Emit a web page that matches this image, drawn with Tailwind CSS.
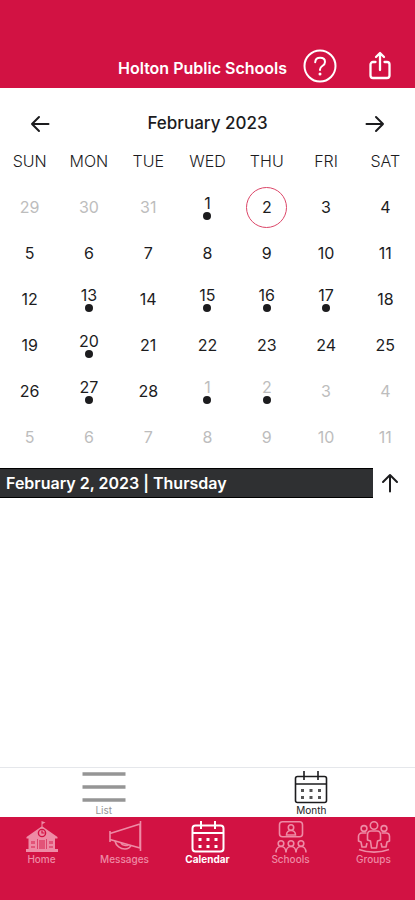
<!DOCTYPE html>
<html lang="en">

<head>
  <meta charset="UTF-8" />
  <meta name="viewport" content="width=device-width, initial-scale=1.0" />
  <title>Holton Public Schools</title>
  <script src="https://cdn.jsdelivr.net/npm/@tailwindcss/browser@4"></script>
</head>

<body class="min-h-screen flex flex-col bg-white text-[#1c1c1e] font-['Inter',sans-serif]">
  <!-- Header -->
  <header class="h-[88px] pr-6 pb-1 flex items-end justify-end bg-[#d21243] text-white">
    <h1 class="h-9 mr-4 pt-1 flex items-center text-base font-semibold">Holton Public Schools</h1>
    <button aria-label="Help" class="mr-8 h-9">
      <svg class="w-[34px] h-[34px]" viewBox="0 0 34 34" fill="none" stroke="currentColor" stroke-width="2" stroke-linecap="round">
        <circle cx="17" cy="17" r="15.5" />
        <path d="M12.200 13.200c.2-2.900 2.200-4.400 4.900-4.400 2.800 0 4.900 1.600 4.900 4.100 0 2-1 3-2.700 4.100-1.700 1.100-2.300 1.900-2.300 3.600v.4" />
        <circle cx="17" cy="25" r="1.500" fill="currentColor" stroke="none" />
      </svg>
    </button>
    <button aria-label="Share" class="h-9">
      <svg class="w-[22px] h-[30px]" viewBox="0 0 22 30" fill="none" stroke="currentColor" stroke-width="2.300" stroke-linecap="round" stroke-linejoin="round">
        <path d="M6.500 11H4a2.500 2.500 0 0 0-2.500 2.500v11A2.500 2.500 0 0 0 4 27h14a2.500 2.500 0 0 0 2.500-2.500v-11A2.500 2.500 0 0 0 18 11h-2.500M11 19V3M7 6l4-4 4 4" />
      </svg>
    </button>
  </header>

  <main class="grow flex flex-col">
    <!-- Month switcher -->
    <div class="h-14 mt-2 px-[30px] flex items-center justify-between">
      <button aria-label="Previous month">
        <svg class="w-5 h-5" viewBox="0 0 20 20" fill="none" stroke="currentColor" stroke-width="2" stroke-linecap="round" stroke-linejoin="round">
          <path d="M18.500 10H2M9 3L2 10l7 7" />
        </svg>
      </button>
      <h2 class="text-[17px] font-medium">February 2023</h2>
      <button aria-label="Next month">
        <svg class="w-5 h-5" viewBox="0 0 20 20" fill="none" stroke="currentColor" stroke-width="2" stroke-linecap="round" stroke-linejoin="round">
          <path d="M1.500 10H18M11 3l7 7-7 7" />
        </svg>
      </button>
    </div>

    <table class="w-full table-fixed text-center text-base">
      <thead>
        <tr class="h-8 align-top leading-[18px]">
          <th class="font-light">SUN</th>
          <th class="font-light">MON</th>
          <th class="font-light">TUE</th>
          <th class="font-light">WED</th>
          <th class="font-light">THU</th>
          <th class="font-light">FRI</th>
          <th class="font-light">SAT</th>
        </tr>
      </thead>
      <tbody id="days"></tbody>
    </table>

    <!-- Selected day -->
    <div class="mt-2 h-[30px] flex">
      <h3 class="grow pl-[6px] flex items-center bg-[#2f3032] border-y border-black text-white text-base font-semibold">February 2, 2023 | Thursday</h3>
      <button aria-label="Collapse calendar" class="w-[42px] pr-2 flex items-center justify-center">
        <svg class="w-5 h-5" viewBox="0 0 20 20" fill="none" stroke="currentColor" stroke-width="2" stroke-linecap="round" stroke-linejoin="round">
          <path d="M10 18.500V2M3 9l7-7 7 7" />
        </svg>
      </button>
    </div>
  </main>

  <!-- View tabs -->
  <div class="h-[50px] grid grid-cols-2 border-t border-gray-200 text-[10px] leading-3">
    <button class="flex flex-col items-center pt-[3px] text-[#959595]">
      <svg class="w-11 h-[33px]" viewBox="0 0 44 33" fill="none" stroke="currentColor" stroke-width="3.500">
        <path d="M.5 3h43M.5 16h43M.5 29h43" />
      </svg>
      List
    </button>
    <button class="flex flex-col items-center pt-[3px]">
      <svg class="w-[34px] h-[33px]" viewBox="0 0 34 33" fill="none" stroke="currentColor" stroke-width="1.600">
        <rect x="1.500" y="5.500" width="31" height="26" rx="2" />
        <path d="M1.500 13h31M10 0v9M24 0v9" />
        <path d="M7 19.500h3M15.500 19.500h3M24 19.500h3M7 26.500h3M15.500 26.500h3M24 26.500h3" stroke="#555" stroke-width="3" />
      </svg>
      Month
    </button>
  </div>

  <!-- Bottom navigation -->
  <nav class="h-[83px] grid grid-cols-5 bg-[#d21243] text-[10px] leading-3 font-medium text-[#ee8ba5]">
    <a href="#" class="flex flex-col items-center pt-1">
      <svg class="w-8 h-8" viewBox="0 0 32 32" fill="currentColor">
        <path d="M15.500 0l4 1.500-3 1.500v2.500l15 10.500v1.500H29V28h3v3H0v-3h2.500V17.500H.5V16l15-10.500z" />
        <circle cx="16" cy="12" r="3.600" fill="none" stroke="#d21243" stroke-width="1.400" />
        <path d="M16 9.500V12h2.500" fill="none" stroke="#d21243" stroke-width="1.200" />
        <path d="M5 20h4v3H5zM5 25h4v2H5zM13 19h6v9h-6zM23 20h4v3h-4zM23 25h4v2h-4z" fill="#d21243" fill-opacity=".45" />
        <path d="M11.500 18v10M20.500 18v10" stroke="#d21243" stroke-width=".6" />
      </svg>
      Home
    </a>
    <a href="#" class="flex flex-col items-center pt-1">
      <svg class="w-[34px] h-8" viewBox="0 0 34 32" fill="none" stroke="currentColor" stroke-width="1.600" stroke-linejoin="round">
        <path d="M2 10v11M2 12.500L32 3v24L2 18.500M32.500 0v30" />
        <path d="M7 20c1 5 5.500 8 10 8 3 0 5-1.500 6-3.500M13 22c1.500 2.500 5 3 7.500 2" />
      </svg>
      Messages
    </a>
    <a href="#" aria-current="page" class="flex flex-col items-center pt-1 font-bold text-white">
      <svg class="w-[34px] h-8" viewBox="0 0 34 32" fill="none" stroke="currentColor" stroke-width="2">
        <rect x="1.500" y="4.500" width="31" height="26" rx="3" />
        <path d="M1.500 12h31M10 0v8M24 0v8" />
        <path d="M7.500 18.500h3M15.500 18.500h3M23.500 18.500h3M7.500 25.500h3M15.500 25.500h3M23.500 25.500h3" stroke-width="3" />
      </svg>
      Calendar
    </a>
    <a href="#" class="flex flex-col items-center pt-1">
      <svg class="w-8 h-8" viewBox="0 0 32 32" fill="none" stroke="currentColor" stroke-width="1.600">
        <rect x="4.500" y=".8" width="23" height="15" rx="3" />
        <circle cx="16" cy="6.500" r="2.700" />
        <path d="M11.500 14c0-6 9-6 9 0z" />
        <circle cx="6" cy="22.500" r="2.800" />
        <circle cx="16" cy="22.500" r="2.800" />
        <circle cx="26" cy="22.500" r="2.800" />
        <path d="M1 31.500c0-8 10-8 10 0c0-8 10-8 10 0c0-8 10-8 10 0" />
      </svg>
      Schools
    </a>
    <a href="#" class="flex flex-col items-center pt-1">
      <svg class="w-[34px] h-8" viewBox="0 0 34 32" fill="none" stroke="currentColor" stroke-width="1.600" stroke-linejoin="round">
        <circle cx="17" cy="4.500" r="3.700" />
        <circle cx="7" cy="7.500" r="2.900" />
        <circle cx="27" cy="7.500" r="2.900" />
        <path d="M14 10h6c2.500 0 3.500 2 3.500 4v5l-3 1-1 7h-5l-1-7-3-1v-5c0-2 1-4 3.500-4z" />
        <path d="M9.500 12H5c-2.500 0-3.500 2-3.500 3.500V20l2.500 1 1 5h4l1-4M24.500 12H29c2.500 0 3.500 2 3.500 3.500V20l-2.500 1-1 5h-4l-1-4" />
        <path d="M2 28.500c9 3.500 21 3.500 30 0" />
      </svg>
      Groups
    </a>
  </nav>

  <script>
    const tbody = document.getElementById("days");
    const events = ["2-1", "2-13", "2-15", "2-16", "2-17", "2-20", "2-27", "3-1", "3-2"];
    const today = "2-2";
    const date = new Date(2023, 0, 29);

    for (let week = 0; week < 6; week++) {
      const row = document.createElement("tr");
      for (let i = 0; i < 7; i++) {
        const month = date.getMonth() + 1;
        const key = month + "-" + date.getDate();
        const color = month === 2 ? "text-[#1c1c1e]" : "text-[#bdbdbd]";
        const ring = key === today ? "border border-[#dc4668]" : "";
        const dot = events.includes(key) ? '<span class="w-2 h-2 rounded-full bg-[#1c1c1e]"></span>' : "";
        row.innerHTML += `<td class="h-[46px] p-0">
          <button class="mx-auto w-[41px] h-[41px] rounded-full flex flex-col items-center justify-center leading-[18px] ${color} ${ring}">${date.getDate()}${dot}</button>
        </td>`;
        date.setDate(date.getDate() + 1);
      }
      tbody.appendChild(row);
    }
  </script>
</body>

</html>
